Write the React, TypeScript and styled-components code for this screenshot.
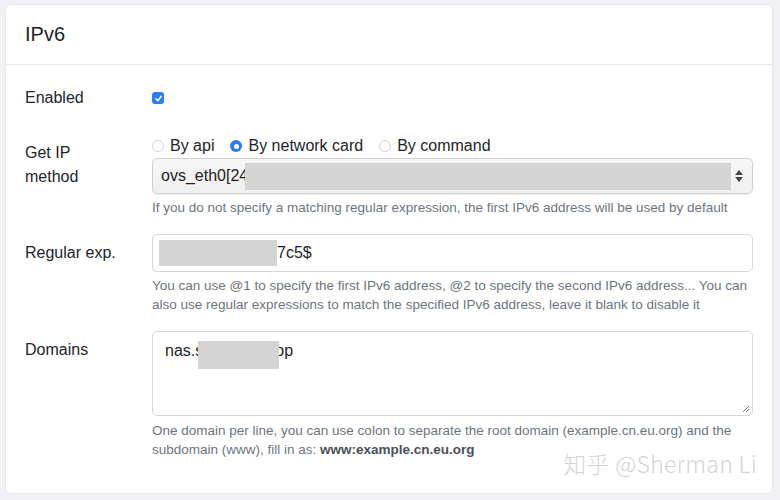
import styled, { createGlobalStyle } from 'styled-components';

const GlobalStyle = createGlobalStyle`
  html, body {
    margin: 0;
    padding: 0;
    background: #f0f0f5;
    font-family: "Liberation Sans", Arial, sans-serif;
    color: #212529;
  }
`;

const Page = styled.div`
  width: 780px;
  height: 500px;
  padding: 4px 7px 0 5px;
  box-sizing: border-box;
`;

const Card = styled.div`
  position: relative;
  height: 490px;
  background: #fff;
  border: 1px solid #e7e7ec;
  border-radius: 6px;
  box-sizing: border-box;
`;

const CardHeader = styled.div`
  height: 59px;
  display: flex;
  align-items: center;
  padding: 0 19px;
  border-bottom: 1px solid #e6e6ea;
  font-size: 20px;
  font-weight: 500;
  color: #222;
`;

const CardBody = styled.div`
  padding: 14px 19px 0 19px;
  display: flex;
  flex-direction: column;
  gap: 17px;
`;

const Row = styled.div`
  display: grid;
  grid-template-columns: 127px 1fr;
  align-items: start;
`;

const Label = styled.div`
  font-size: 16px;
  line-height: 24px;
  padding: 7px 0;
  white-space: nowrap;
`;

const Control = styled.div<{ $pt?: number }>`
  display: flex;
  flex-direction: column;
  padding-top: ${({ $pt }) => $pt ?? 0}px;
`;

const Checkbox = styled.span`
  width: 12px;
  height: 12px;
  border-radius: 3px;
  background: #2a7df5;
  display: inline-flex;
  align-items: center;
  justify-content: center;
`;

const RadioRow = styled.div`
  display: flex;
  align-items: center;
  height: 24px;
  gap: 16px;
  font-size: 16px;
`;

const RadioItem = styled.label`
  display: flex;
  align-items: center;
  gap: 6px;
`;

const RadioDot = styled.span<{ $on?: boolean }>`
  width: 12px;
  height: 12px;
  border-radius: 50%;
  box-sizing: border-box;
  background: ${({ $on }) => ($on ? '#2a7df5' : '#fff')};
  border: ${({ $on }) => ($on ? 'none' : '1px solid #d2d2d6')};
  display: inline-flex;
  align-items: center;
  justify-content: center;
  &::after {
    content: '';
    display: ${({ $on }) => ($on ? 'block' : 'none')};
    width: 5px;
    height: 5px;
    border-radius: 50%;
    background: #fff;
  }
`;

const SelectBox = styled.div`
  height: 36px;
  box-sizing: border-box;
  display: flex;
  align-items: center;
  padding: 0 8px;
  border: 1px solid #d0d0d4;
  border-radius: 5px;
  background: linear-gradient(#f6f6f6, #f0f0f0);
  box-shadow: 0 1px 1px rgba(0, 0, 0, 0.08);
  font-size: 16px;
  color: #222;
`;

const InputBox = styled.div`
  height: 38px;
  box-sizing: border-box;
  display: flex;
  align-items: center;
  padding: 0 6px;
  border: 1px solid #d6d6da;
  border-radius: 5px;
  background: #fff;
  font-size: 16px;
  color: #222;
`;

const TextBox = styled.div`
  position: relative;
  height: 85px;
  box-sizing: border-box;
  padding: 9px 12px;
  border: 1px solid #d6d6da;
  border-radius: 5px;
  background: #fff;
  font-size: 16px;
  line-height: 20px;
  color: #222;
  display: flex;
  align-items: flex-start;
`;

const Redact = styled.span<{ $w: number; $h: number; $ml?: number }>`
  position: relative;
  display: inline-block;
  width: ${({ $w }) => $w}px;
  height: ${({ $h }) => $h}px;
  margin-left: ${({ $ml }) => $ml ?? 0}px;
  background: #d4d4d4;
  flex-shrink: 0;
`;

const Tail = styled.span`
  margin-left: -4px;
`;

const Grow = styled.span`
  flex: 1;
`;

const Grip = styled.svg`
  position: absolute;
  right: 2px;
  bottom: 2px;
`;

const Help = styled.div<{ $mt?: number }>`
  margin-top: ${({ $mt }) => $mt ?? 4}px;
  font-size: 13.5px;
  line-height: 19px;
  color: #6c757d;
  white-space: nowrap;
  b {
    color: #495057;
    font-weight: 700;
  }
`;

const Watermark = styled.div`
  position: absolute;
  right: 15px;
  bottom: 13px;
  font-family: "Noto Sans CJK SC", "Liberation Sans", sans-serif;
  font-size: 23px;
  font-weight: 300;
  color: rgba(165, 165, 170, 0.5);
  letter-spacing: 0.3px;
`;

export default function App() {
  return (
    <>
      <GlobalStyle />
      <Page>
        <Card>
          <CardHeader>IPv6</CardHeader>
          <CardBody>
            <Row>
              <Label>Enabled</Label>
              <Control $pt={13}>
                <Checkbox>
                  <svg width="9" height="9" viewBox="0 0 10 10">
                    <path d="M2 5.3 L4.2 7.4 L8 2.6" fill="none" stroke="#fff" strokeWidth="1.7" strokeLinecap="round" strokeLinejoin="round" />
                  </svg>
                </Checkbox>
              </Control>
            </Row>

            <Row>
              <Label>
                Get IP
                <br />
                method
              </Label>
              <Control>
                <RadioRow>
                  <RadioItem><RadioDot />By api</RadioItem>
                  <RadioItem><RadioDot $on />By network card</RadioItem>
                  <RadioItem><RadioDot />By command</RadioItem>
                </RadioRow>
                <SelectBox>
                  <span>ovs_eth0[24</span>
                  <Redact $w={486} $h={27} $ml={-3} />
                  <Grow />
                  <svg width="10" height="14" viewBox="0 0 10 14">
                    <path d="M5 1 L9 6 L1 6 Z" fill="#444" />
                    <path d="M5 13 L9 8 L1 8 Z" fill="#444" />
                  </svg>
                </SelectBox>
                <Help $mt={4}>If you do not specify a matching regular expression, the first IPv6 address will be used by default</Help>
              </Control>
            </Row>

            <Row>
              <Label>Regular exp.</Label>
              <Control>
                <InputBox>
                  <Redact $w={118} $h={26} />
                  <span>7c5$</span>
                </InputBox>
                <Help $mt={4}>
                  You can use @1 to specify the first IPv6 address, @2 to specify the second IPv6 address... You can
                  <br />
                  also use regular expressions to match the specified IPv6 address, leave it blank to disable it
                </Help>
              </Control>
            </Row>

            <Row>
              <Label>Domains</Label>
              <Control>
                <TextBox>
                  <span>nas.s</span>
                  <Redact $w={81} $h={28} $ml={-5} />
                  <Tail>op</Tail>
                  <Grip width="9" height="9" viewBox="0 0 9 9">
                    <path d="M8 2 L2 8 M8 5 L5 8" stroke="#777" strokeWidth="1" />
                  </Grip>
                </TextBox>
                <Help $mt={5}>
                  One domain per line, you can use colon to separate the root domain (example.cn.eu.org) and the
                  <br />
                  subdomain (www), fill in as: <b>www:example.cn.eu.org</b>
                </Help>
              </Control>
            </Row>
          </CardBody>
          <Watermark>知乎 @Sherman Li</Watermark>
        </Card>
      </Page>
    </>
  );
}
